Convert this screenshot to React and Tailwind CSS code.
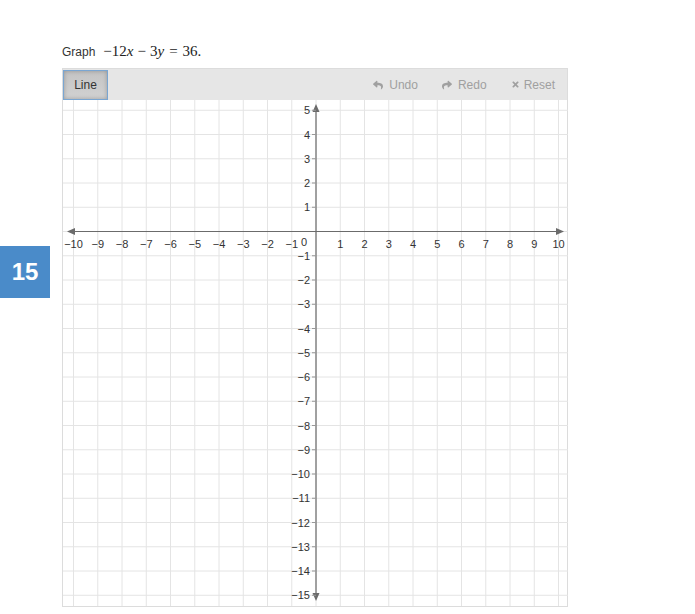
import React from 'react';
import { FaReply, FaShare, FaTimes } from 'react-icons/fa';

const UNIT = 24.25;
const OX = 253;
const OY = 131.5;
const W = 505;
const H = 506;

const sx = (x) => OX + x * UNIT;
const sy = (y) => OY - y * UNIT;

const xs = Array.from({ length: 21 }, (_, i) => i - 10);
const ys = Array.from({ length: 21 }, (_, i) => 5 - i);

const label = (n) => (n < 0 ? `\u2212${Math.abs(n)}` : `${n}`);

const Graph = () => (
    <svg width={W} height={H} className="block" style={{ fontFamily: '"Liberation Sans", Arial, sans-serif' }}>
        {xs.map((x) => (
            <line key={`gx${x}`} x1={sx(x)} x2={sx(x)} y1={0} y2={H} stroke="#e4e4e4" strokeWidth="1" />
        ))}
        {ys.map((y) => (
            <line key={`gy${y}`} x1={0} x2={W} y1={sy(y)} y2={sy(y)} stroke="#e4e4e4" strokeWidth="1" />
        ))}

        {/* axes */}
        <line x1={6} x2={499} y1={OY} y2={OY} stroke="#6b6b6b" strokeWidth="1.2" />
        <line x1={OX} x2={OX} y1={6} y2={H - 7} stroke="#6b6b6b" strokeWidth="1.2" />
        <polygon points={`4,${OY} 12,${OY - 3.5} 12,${OY + 3.5}`} fill="#6b6b6b" />
        <polygon points={`501,${OY} 493,${OY - 3.5} 493,${OY + 3.5}`} fill="#6b6b6b" />
        <polygon points={`${OX},4 ${OX - 3.5},12 ${OX + 3.5},12`} fill="#6b6b6b" />
        <polygon points={`${OX},${H - 5} ${OX - 3.5},${H - 13} ${OX + 3.5},${H - 13}`} fill="#6b6b6b" />

        {xs.filter((x) => x !== 0).map((x) => (
            <text key={`tx${x}`} x={sx(x)} y={OY + 16} textAnchor="middle" fontSize="11" fill="#333">{label(x)}</text>
        ))}
        {ys.filter((y) => y !== 0).map((y) => (
            <g key={`ty${y}`}>
                <line x1={OX - 4} x2={OX} y1={sy(y)} y2={sy(y)} stroke="#999" strokeWidth="1" />
                <text x={OX - 6} y={sy(y) + 4} textAnchor="end" fontSize="11" fill="#333">{label(y)}</text>
            </g>
        ))}
        <text x={OX - 12} y={OY + 14} textAnchor="middle" fontSize="11" fill="#333">0</text>
    </svg>
);

const App = () => {
    return (
        <div className="w-[695px] h-[614px] bg-white flex overflow-hidden font-['Liberation_Sans',Arial,sans-serif]">
            <div className="w-[50px] h-[52px] mt-[246px] bg-[#4a8bc9] flex items-center justify-center text-white font-bold text-[24px] shrink-0">
                15
            </div>

            <div className="ml-[12px] pt-[40px] flex flex-col">
                <div className="flex items-baseline h-[20px] text-[12px] text-[#333]">
                    <span>Graph</span>
                    <span className="ml-[8px] font-['Liberation_Serif','Times_New_Roman',serif] text-[15px] text-[#222]">
                        {'\u2212'}12<i>x</i>
                        <span className="mx-[4px]">{'\u2212'}</span>
                        3<i>y</i>
                        <span className="mx-[5px]">=</span>
                        36.
                    </span>
                </div>

                <div className="w-[506px] mt-[8px] border border-[#dcdcdc]">
                    <div className="h-[31px] bg-[#e6e6e6] flex items-center">
                        <button className="h-[30px] w-[45px] border border-[#7aa6d2] bg-gradient-to-b from-[#c4c4c4] to-[#d2d2d2] shadow-[inset_0_0_4px_rgba(0,0,0,0.25)] text-[12px] text-[#333]">
                            Line
                        </button>
                        <div className="ml-auto flex items-center text-[12px] text-[#a0a0a0] gap-[24px] pr-[12px]">
                            <span className="flex items-center gap-[6px]">
                                <FaReply size={10} />
                                Undo
                            </span>
                            <span className="flex items-center gap-[6px]">
                                <FaShare size={10} />
                                Redo
                            </span>
                            <span className="flex items-center gap-[4px]">
                                <FaTimes size={9} />
                                Reset
                            </span>
                        </div>
                    </div>
                    <Graph />
                </div>
            </div>
        </div>
    );
};

export default App;
